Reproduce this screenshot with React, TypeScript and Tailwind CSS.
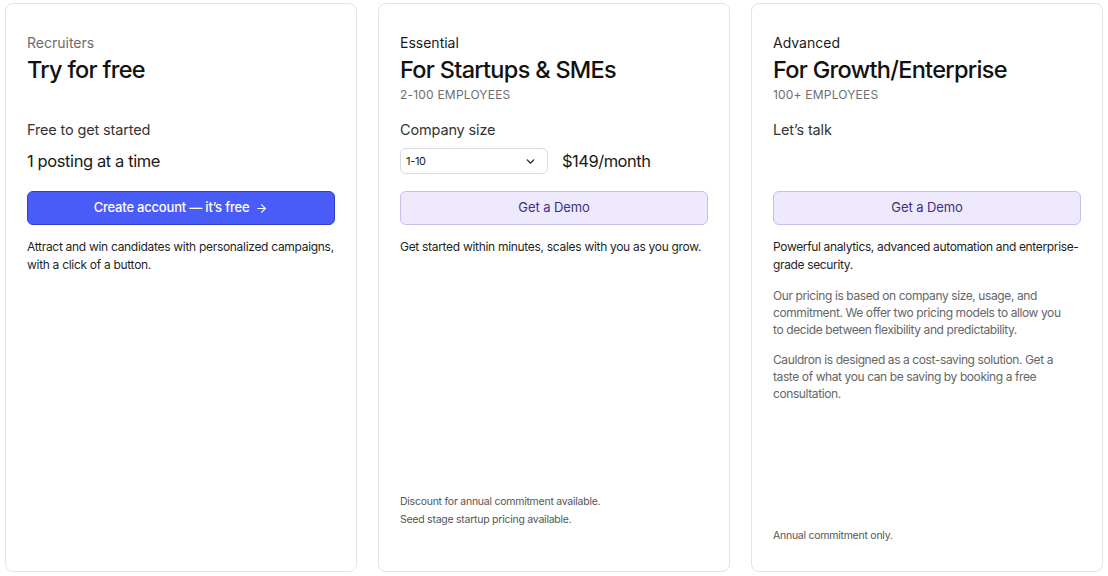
import React from 'react';
import { ChevronDown, ArrowRight } from 'lucide-react';

const font = { fontFamily: 'Inter, "Noto Sans", sans-serif' };

const Card: React.FC<{ children: React.ReactNode }> = ({ children }) => (
  <div className="flex flex-col w-[352px] h-[569px] border border-[#e3e3e6] rounded-[8px] bg-white px-[21px] pt-[29px] pb-[26px]">
    {children}
  </div>
);

const Header: React.FC<{ label: string; title: string; sub?: string; muted?: boolean }> = ({
  label,
  title,
  sub,
  muted
}) => (
  <div>
    <div className={`text-[14px] leading-[20px] ${muted ? 'text-[#6b6b70]' : 'text-[#1a1a1a]'}`}>{label}</div>
    <div className="mt-[2px] text-[23.5px] leading-[30px] font-medium text-[#111] tracking-[-0.7px]">{title}</div>
    <div className="mt-[2px] h-[16px] text-[12px] leading-[16px] uppercase tracking-[0.2px] text-[#6e6e73]">
      {sub}
    </div>
  </div>
);

const DemoButton = () => (
  <button className="mt-[17px] h-[34px] w-full rounded-[6px] border border-[#c9bdf0] bg-[#efe9fd] text-[13px] tracking-[-0.1px] text-[#3d2f8c]">
    Get a Demo
  </button>
);

export default function App() {
  return (
    <div style={font} className="flex gap-[21px] px-[5px] pt-[3px] h-[576px] bg-white">
      <Card>
        <Header label="Recruiters" title="Try for free" muted />
        <div className="mt-[16px] text-[14.5px] leading-[22px] tracking-[-0.15px] text-[#333]">Free to get started</div>
        <div className="mt-[7px] h-[26px] flex items-center text-[16.5px] tracking-[-0.4px] text-[#1a1a1a]">
          1 posting at a time
        </div>
        <button className="mt-[17px] h-[34px] w-full rounded-[6px] border border-[#2f3fcc] bg-[#4a5cf7] text-white text-[13px] tracking-[-0.2px] font-medium flex items-center justify-center gap-[6px]">
          Create account — it’s free
          <ArrowRight size={13} strokeWidth={2} />
        </button>
        <p className="mt-[13px] text-[12px] leading-[18px] tracking-[-0.3px] text-[#1f1f1f]">
          Attract and win candidates with personalized campaigns, with a click of a button.
        </p>
      </Card>

      <Card>
        <Header label="Essential" title="For Startups & SMEs" sub="2-100 employees" />
        <div className="mt-[16px] text-[14.5px] leading-[22px] tracking-[-0.15px] text-[#333]">Company size</div>
        <div className="mt-[7px] h-[26px] flex items-center gap-[14px]">
          <div className="w-[148px] h-[26px] border border-[#d9d9de] rounded-[6px] flex items-center justify-between pl-[5px] pr-[10px] text-[11px] tracking-[-0.3px] text-[#222]">
            <span>1-10</span>
            <ChevronDown size={13} strokeWidth={2.5} />
          </div>
          <span className="text-[16.5px] tracking-[-0.5px] text-[#1a1a1a]">$149/month</span>
        </div>
        <DemoButton />
        <p className="mt-[13px] text-[12px] leading-[18px] tracking-[-0.3px] text-[#1f1f1f]">
          Get started within minutes, scales with you as you grow.
        </p>
        <div className="mt-auto mb-[16px] text-[10.5px] leading-[18px] tracking-[-0.25px] text-[#555]">
          <div>Discount for annual commitment available.</div>
          <div>Seed stage startup pricing available.</div>
        </div>
      </Card>

      <Card>
        <Header label="Advanced" title="For Growth/Enterprise" sub="100+ employees" />
        <div className="mt-[16px] text-[14.5px] leading-[22px] tracking-[-0.15px] text-[#333]">Let’s talk</div>
        <div className="mt-[7px] h-[26px]" />
        <DemoButton />
        <p className="mt-[13px] text-[12px] leading-[18px] tracking-[-0.35px] text-[#1f1f1f]">
          Powerful analytics, advanced automation and enterprise-
          <br />
          grade security.
        </p>
        <p className="mt-[13px] max-w-[300px] text-[12px] leading-[17px] tracking-[-0.4px] text-[#666]">
          Our pricing is based on company size, usage, and commitment. We offer two pricing models to allow you to
          decide between flexibility and predictability.
        </p>
        <p className="mt-[13px] text-[12px] leading-[17px] tracking-[-0.4px] text-[#666]">
          Cauldron is designed as a cost-saving solution. Get a taste of what you can be saving by booking a free
          consultation.
        </p>
        <div className="mt-auto text-[10.5px] leading-[18px] tracking-[-0.25px] text-[#555]">Annual commitment only.</div>
      </Card>
    </div>
  );
}
